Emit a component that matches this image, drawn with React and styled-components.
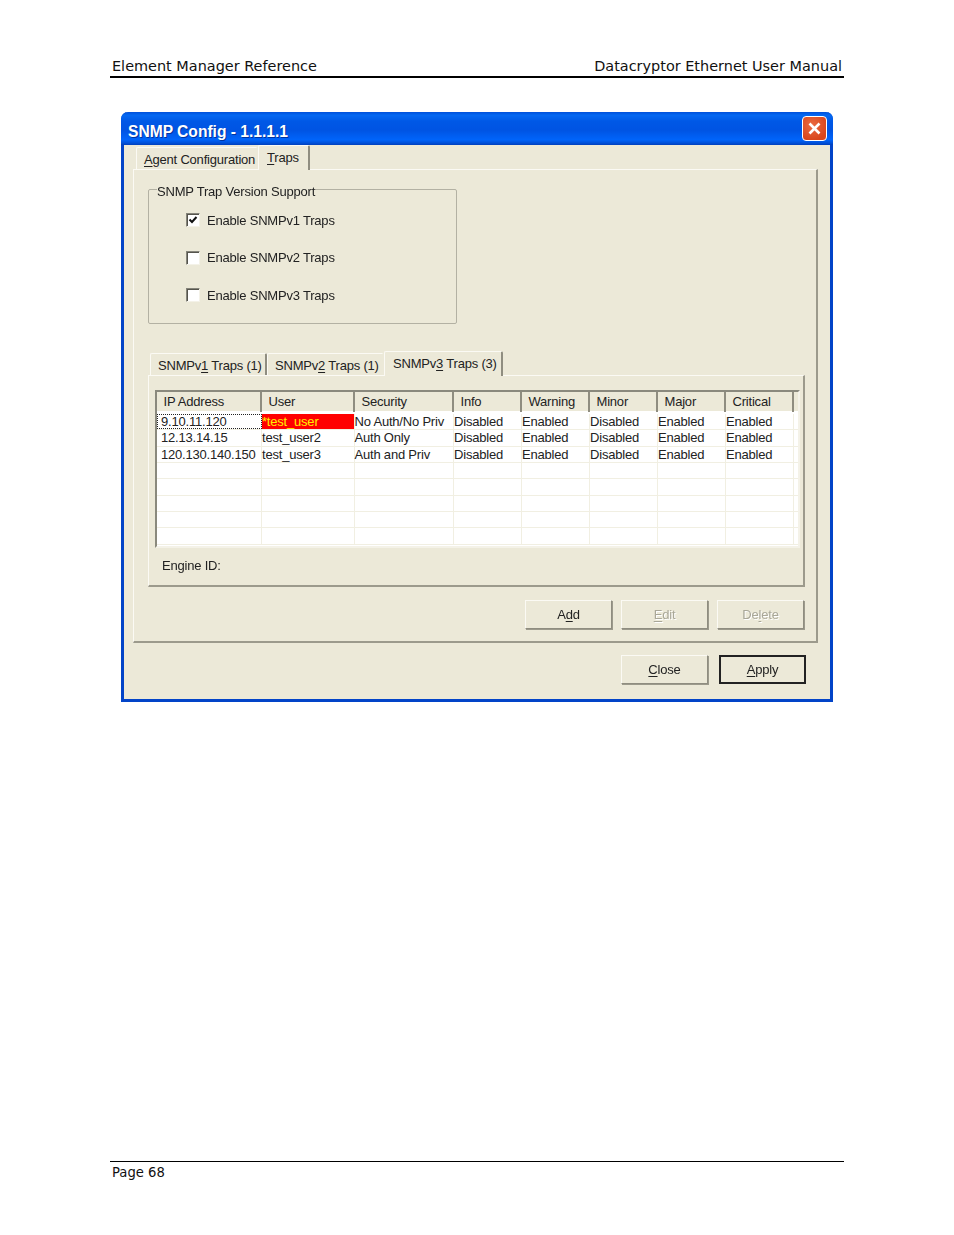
import React from 'react';
import styled, { createGlobalStyle } from 'styled-components';

const Global = createGlobalStyle`
  html, body { margin: 0; padding: 0; background: #fff; }
  #root { width: 954px; height: 1235px; }
`;

const Page = styled.div`
  width: 954px; height: 1235px; box-sizing: border-box; padding: 0 110px;
  display: flex; flex-direction: column; background: #fff;
  font-family: "DejaVu Sans", sans-serif; color: #111;
`;
const Header = styled.header`
  margin-top: 55px; height: 23px; box-sizing: border-box; padding: 1px 2px 0;
  border-bottom: 2px solid #000; display: flex; justify-content: space-between;
  font-size: 14.45px; line-height: 20px; white-space: nowrap;
`;
const Footer = styled.footer`
  margin-top: auto; margin-bottom: 53px; border-top: 1px solid #000; padding: 2px 2px 0;
  font-size: 13.2px; line-height: 18px;
`;
const Win = styled.section`
  margin: 34px 0 0 11px; width: 712px; height: 590px; box-sizing: border-box;
  background: #ECE9D8; border: solid #0244C8; border-width: 0 3px 3px; border-radius: 7px 7px 0 0;
  display: flex; flex-direction: column; color: #222;
  font-family: "Liberation Sans", sans-serif; font-size: 13px; letter-spacing: -0.2px; filter: blur(0.35px);
`;
const TitleBar = styled.div`
  margin: 0 -3px; height: 33px; flex: none; box-sizing: border-box; padding: 0 6px 0 7px;
  border-radius: 7px 7px 0 0; display: flex; align-items: center; justify-content: space-between;
  background: linear-gradient(180deg, #0050DA 0, #0468F2 10%, #0058E6 28%, #0054E3 55%, #0064FA 84%, #0050D8 94%, #003FBC 100%);
`;
const Title = styled.h1`
  margin: 0; padding-top: 6px; color: #fff; font: bold 15.6px/1 "Liberation Sans", sans-serif;
  letter-spacing: 0; text-shadow: 1px 1px 0 #0034a0;
`;
const CloseBox = styled.div`
  width: 25px; height: 25px; box-sizing: border-box; border: 1px solid #fff; border-radius: 4px;
  background: radial-gradient(circle at 40% 35%, #EA6B42, #D8451C 75%);
  display: flex; align-items: center; justify-content: center;
`;
const TabStrip = styled.div`
  display: flex; align-items: flex-end; height: 24px; flex: none; box-sizing: border-box;
  padding-left: ${p => p.$left}px;
`;
const Tab = styled.div`
  position: relative; z-index: ${p => (p.$active ? 2 : 1)};
  width: ${p => p.$w}px; height: ${p => (p.$active ? 25 : 22)}px; box-sizing: border-box;
  margin-bottom: ${p => (p.$active ? -1 : 0)}px;
  padding: ${p => (p.$active ? '3px 0 0 8px' : '3px 0 0 7px')};
  background: #ECE9D8; line-height: 18px; white-space: nowrap;
  border-top: 1px solid #fbfaf4; border-left: 1px solid #fbfaf4;
  border-right: 2px solid ${p => (p.$plain ? '#ECE9D8' : '#8f8d80')};
  border-radius: 2px 2px 0 0;
`;
const Mn = styled.u` text-decoration-thickness: 1px; text-underline-offset: 2px; `;
const OuterPanel = styled.div`
  margin: 0 12px 0 9px; height: 474px; box-sizing: border-box; flex: none; padding: 0 11px 0 14px;
  border: 1px solid #fbfaf4; border-right: 2px solid #9c9a8c; border-bottom: 2px solid #9c9a8c;
`;
const Group = styled.fieldset`
  margin: 7px 0 0; padding: 0; width: 309px; height: 147px; box-sizing: border-box;
  border: 1px solid #b3b1a3; border-radius: 2px;
`;
const Legend = styled.legend` padding: 6px 0 0; margin-left: 8px; line-height: 18px; white-space: nowrap; `;
const CheckList = styled.div` display: flex; flex-direction: column; padding: 0.5px 0 0 37px; `;
const CheckRow = styled.label` display: flex; align-items: center; gap: 7px; height: 37.5px; white-space: nowrap; `;
const Box = styled.span`
  width: 14px; height: 14px; box-sizing: border-box; background: #fff; flex: none;
  border: 1px solid; border-color: #85847a #f4f2e8 #f4f2e8 #85847a; box-shadow: inset 1px 1px 0 #55544c;
  display: flex; align-items: center; justify-content: center;
`;
const InnerArea = styled.div` margin-top: 27px; `;
const InnerPanel = styled.div`
  height: 212px; box-sizing: border-box; padding: 14px 5px 0 6px; position: relative; z-index: 1;
  border: 1px solid #fbfaf4; border-right: 2px solid #9c9a8c; border-bottom: 2px solid #9c9a8c;
`;
const TableFrame = styled.div`
  width: 645px; height: 158px; box-sizing: border-box; background: #fff; overflow: hidden;
  border: 2px solid; border-color: #8a897d #f4f2e8 #f4f2e8 #8a897d;
`;
const HeaderRow = styled.div`
  height: 20px; box-sizing: border-box; display: grid; grid-template-columns: 105px 93px 99px 68px 68px 68px 68px 68px 1fr;
  background: #ECE9D8; border-bottom: 1px solid #fff;
`;
const HeadCell = styled.div`
  padding-left: 6.5px; line-height: 20px; box-sizing: border-box; border-right: 2px solid #8f8d80; white-space: nowrap;
  &:last-child { border-right: 0; }
`;
const Rows = styled.div` padding-top: 2px; `;
const Row = styled.div`
  height: 16.35px; box-sizing: border-box; display: grid; grid-template-columns: 105px 92.5px 99.5px 68px 68px 68px 68px 68px 1fr;
  border-bottom: 1px solid #F1EFE2;
`;
const Cell = styled.div`
  box-sizing: border-box; line-height: 15px; padding-left: ${p => (p.$first ? 4 : 0)}px; white-space: nowrap;
  border-right: 1px solid #F1EFE2; color: #222;
  ${p => p.$alert && 'background:#FF0000;color:#FFEE00;'}
  ${p => p.$focus && 'outline:1px dotted #222;outline-offset:-1px;'}
  &:last-child { border-right: 0; }
`;
const EngineLine = styled.div` margin: 9px 0 0 7px; line-height: 18px; `;
const Buttons = styled.div`
  display: flex; justify-content: flex-end; gap: ${p => p.$gap}px; margin: ${p => p.$m};
`;
const Btn = styled.button`
  width: 87px; height: 29px; box-sizing: border-box; padding: 0; background: #ECE9D8; font: inherit; letter-spacing: inherit;
  color: ${p => (p.$off ? '#a9a798' : '#222')};
  text-shadow: ${p => (p.$off ? '1px 1px 0 #fff' : 'none')};
  border: 1px solid; border-color: #fbfaf4 #8f8d80 #8f8d80 #fbfaf4;
  box-shadow: 1px 1px 0 #9c9a8c;
  ${p => p.$def && 'border:2px solid #222;box-shadow:none;'}
`;

const rows = [
  ['9.10.11.120', '*test_user', 'No Auth/No Priv', 'Disabled', 'Enabled', 'Disabled', 'Enabled', 'Enabled'],
  ['12.13.14.15', 'test_user2', 'Auth Only', 'Disabled', 'Enabled', 'Disabled', 'Enabled', 'Enabled'],
  ['120.130.140.150', 'test_user3', 'Auth and Priv', 'Disabled', 'Enabled', 'Disabled', 'Enabled', 'Enabled'],
  ...Array(5).fill(Array(8).fill('')),
];
const heads = ['IP Address', 'User', 'Security', 'Info', 'Warning', 'Minor', 'Major', 'Critical', ''];

function Check({ on, label }) {
  return (
    <CheckRow>
      <Box>
        {on && (
          <svg width="10" height="10" viewBox="0 0 10 10">
            <path d="M1.5 4.5 L4 7 L8.5 2" fill="none" stroke="#111" strokeWidth="2" />
          </svg>
        )}
      </Box>
      {label}
    </CheckRow>
  );
}

export default function App() {
  return (
    <Page>
      <Global />
      <Header>
        <span>Element Manager Reference</span>
        <span>Datacryptor Ethernet User Manual</span>
      </Header>
      <Win>
        <TitleBar>
          <Title>SNMP Config - 1.1.1.1</Title>
          <CloseBox>
            <svg width="15" height="15" viewBox="0 0 15 15">
              <path d="M2.5 2.5 L12.5 12.5 M12.5 2.5 L2.5 12.5" stroke="#fff" strokeWidth="2.6" />
            </svg>
          </CloseBox>
        </TitleBar>
        <TabStrip $left={12}>
          <Tab $plain $w={122}><Mn>A</Mn>gent Configuration</Tab>
          <Tab $active $w={52}><Mn>T</Mn>raps</Tab>
        </TabStrip>
        <OuterPanel>
          <Group>
            <Legend>SNMP Trap Version Support</Legend>
            <CheckList>
              <Check on label="Enable SNMPv1 Traps" />
              <Check label="Enable SNMPv2 Traps" />
              <Check label="Enable SNMPv3 Traps" />
            </CheckList>
          </Group>
          <InnerArea>
            <TabStrip $left={2}>
              <Tab $w={117}>SNMPv<Mn>1</Mn> Traps (1)</Tab>
              <Tab $plain $w={117}>SNMPv<Mn>2</Mn> Traps (1)</Tab>
              <Tab $active $w={119}>SNMPv<Mn>3</Mn> Traps (3)</Tab>
            </TabStrip>
            <InnerPanel>
              <TableFrame>
                <HeaderRow>
                  {heads.map((h, i) => <HeadCell key={i}>{h}</HeadCell>)}
                </HeaderRow>
                <Rows>
                  {rows.map((r, i) => (
                    <Row key={i}>
                      {r.map((c, j) => (
                        <Cell key={j} $first={j === 0} $focus={i === 0 && j === 0} $alert={i === 0 && j === 1}>{c}</Cell>
                      ))}
                      <Cell />
                    </Row>
                  ))}
                </Rows>
              </TableFrame>
              <EngineLine>Engine ID:</EngineLine>
            </InnerPanel>
            <Buttons $gap={9} $m="13px 1px 0 0">
              <Btn>A<Mn>d</Mn>d</Btn>
              <Btn $off><Mn>E</Mn>dit</Btn>
              <Btn $off>De<Mn>l</Mn>ete</Btn>
            </Buttons>
          </InnerArea>
        </OuterPanel>
        <Buttons $gap={11} $m="12px 24px 0 0">
          <Btn><Mn>C</Mn>lose</Btn>
          <Btn $def><Mn>A</Mn>pply</Btn>
        </Buttons>
      </Win>
      <Footer>Page 68</Footer>
    </Page>
  );
}
